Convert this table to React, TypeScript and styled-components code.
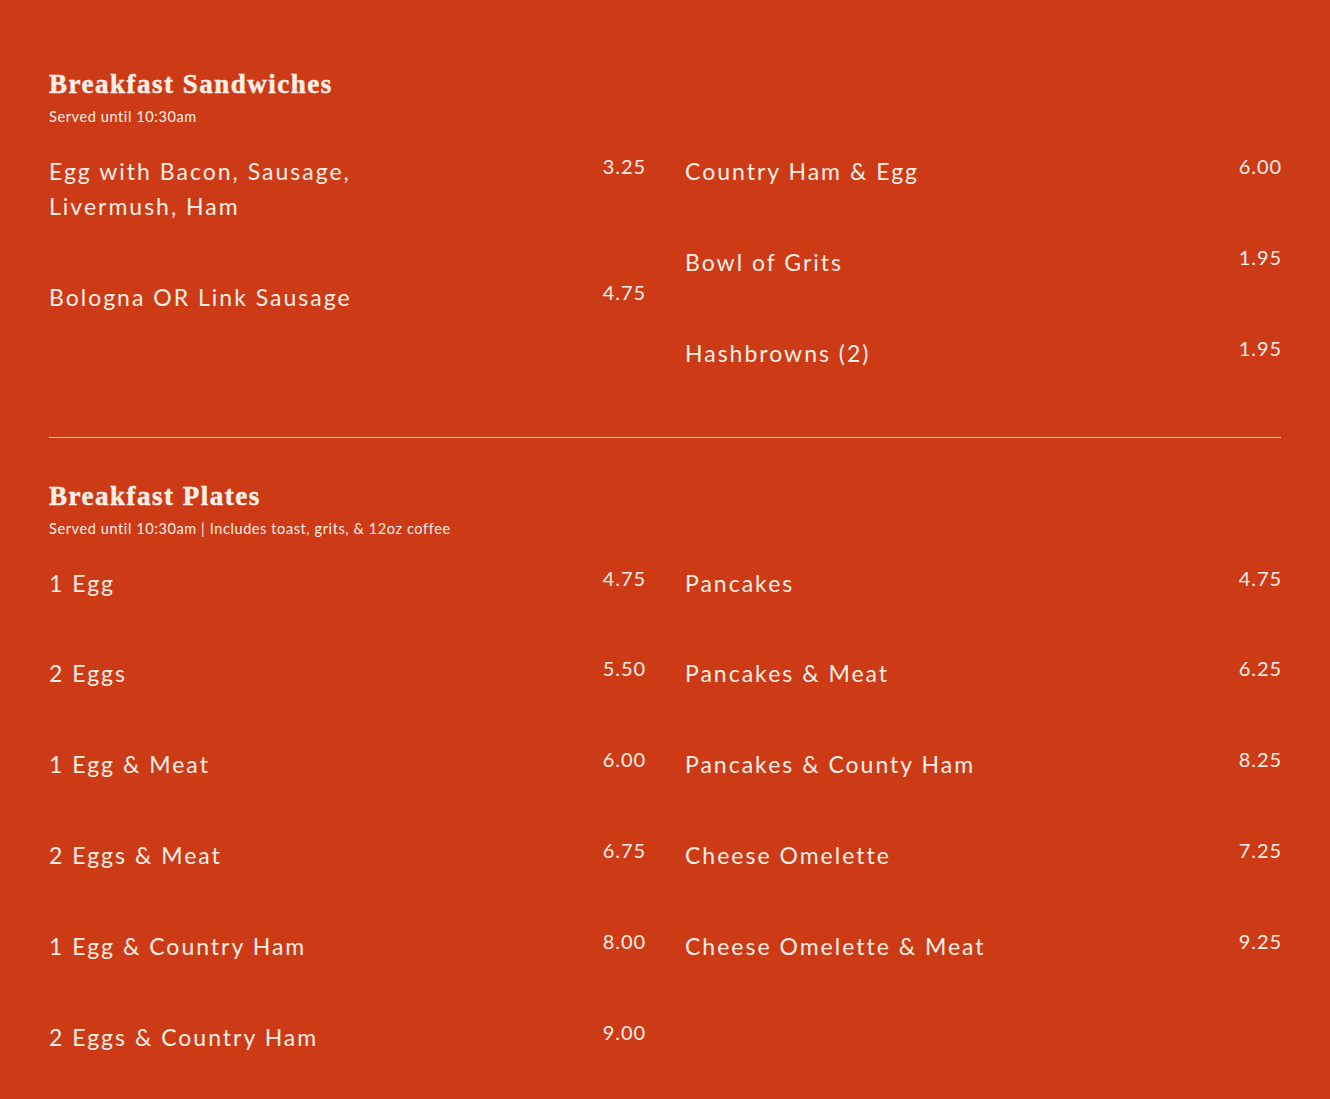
import React from 'react';
import styled, { createGlobalStyle } from 'styled-components';

interface Item {
    name: string;
    price: string;
}

interface Section {
    title: string;
    note: string;
    left: Item[];
    right: Item[];
}

const sections: Section[] = [
    {
        title: 'Breakfast Sandwiches',
        note: 'Served until 10:30am',
        left: [
            { name: 'Egg with Bacon, Sausage, Livermush, Ham', price: '3.25' },
            { name: 'Bologna OR Link Sausage', price: '4.75' },
        ],
        right: [
            { name: 'Country Ham & Egg', price: '6.00' },
            { name: 'Bowl of Grits', price: '1.95' },
            { name: 'Hashbrowns (2)', price: '1.95' },
        ],
    },
    {
        title: 'Breakfast Plates',
        note: 'Served until 10:30am | Includes toast, grits, & 12oz coffee',
        left: [
            { name: '1 Egg', price: '4.75' },
            { name: '2 Eggs', price: '5.50' },
            { name: '1 Egg & Meat', price: '6.00' },
            { name: '2 Eggs & Meat', price: '6.75' },
            { name: '1 Egg & Country Ham', price: '8.00' },
            { name: '2 Eggs & Country Ham', price: '9.00' },
        ],
        right: [
            { name: 'Pancakes', price: '4.75' },
            { name: 'Pancakes & Meat', price: '6.25' },
            { name: 'Pancakes & County Ham', price: '8.25' },
            { name: 'Cheese Omelette', price: '7.25' },
            { name: 'Cheese Omelette & Meat', price: '9.25' },
        ],
    },
];

const GlobalStyle = createGlobalStyle`
  html, body {
    margin: 0;
    background: #cd3a16;
  }
`

const Page = styled.div`
  min-height: 1099px;
  box-sizing: border-box;
  padding: 68px 49px 0;
  background: #cd3a16;
  color: #fcefe6;
  font-family: Lato, "Open Sans", sans-serif;
`

const MenuSection = styled.section<{ $last?: boolean }>`
  padding-bottom: ${p => (p.$last ? '0' : '66px')};
  border-bottom: ${p => (p.$last ? 'none' : '1px solid #f3cdbd')};
  margin-bottom: ${p => (p.$last ? '0' : '42px')};
`

const Title = styled.h2`
  margin: 0;
  font-family: "Liberation Serif", "DejaVu Serif", serif;
  font-weight: 700;
  font-size: 27px;
  line-height: 32px;
  letter-spacing: 1.5px;
  -webkit-text-stroke: 0.5px #fcefe6;
`

const Note = styled.p`
  margin: 7px 0 0;
  font-size: 14.5px;
  line-height: 20px;
  letter-spacing: 0.6px;
`

const Columns = styled.div`
  display: grid;
  grid-template-columns: 1fr 1fr;
  column-gap: 40px;
  margin-top: 27px;
`

const Column = styled.div`
  display: flex;
  flex-direction: column;
  gap: 55.8px;
`

const Row = styled.div`
  display: flex;
  justify-content: space-between;
  align-items: flex-start;
`

const Name = styled.div`
  max-width: 390px;
  font-size: 23px;
  line-height: 35px;
  letter-spacing: 2px;
`

const Price = styled.div`
  font-size: 20px;
  line-height: 25px;
  letter-spacing: 0.9px;
  margin-right: -0.9px;
`

const MenuItem = ({ item }: { item: Item }) => (
    <Row>
        <Name>{item.name}</Name>
        <Price>{item.price}</Price>
    </Row>
)

const App = () => {
    return (
        <>
            <GlobalStyle />
            <Page>
                {sections.map((s, i) => (
                    <MenuSection key={s.title} $last={i === sections.length - 1}>
                        <Title>{s.title}</Title>
                        <Note>{s.note}</Note>
                        <Columns>
                            <Column>
                                {s.left.map(item => <MenuItem key={item.name} item={item} />)}
                            </Column>
                            <Column>
                                {s.right.map(item => <MenuItem key={item.name} item={item} />)}
                            </Column>
                        </Columns>
                    </MenuSection>
                ))}
            </Page>
        </>
    )
}

export default App;
